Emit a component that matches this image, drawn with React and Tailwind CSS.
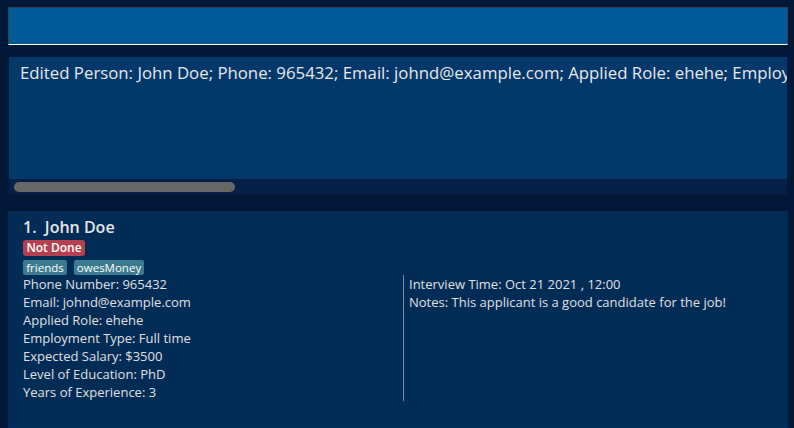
import React from 'react';

const details = [
    'Phone Number: 965432',
    'Email: johnd@example.com',
    'Applied Role: ehehe',
    'Employment Type: Full time',
    'Expected Salary: $3500',
    'Level of Education: PhD',
    'Years of Experience: 3',
];

const notes = [
    'Interview Time: Oct 21 2021 , 12:00',
    'Notes: This applicant is a good candidate for the job!',
];

const App = () => {
    return (
        <div
            className="w-[794px] h-[428px] overflow-hidden bg-[#011936] pt-[7px] pl-[8px]"
            style={{ fontFamily: '"Open Sans", "Noto Sans", sans-serif' }}
        >
            {/* command box */}
            <div className="w-[780px] h-[38px] bg-[#015a96] border border-[#3b3f46] border-b-white" />

            {/* result display */}
            <div className="mt-[12px] ml-[1px] w-[778px]">
                <div className="h-[122px] bg-[#03386b] overflow-hidden pl-[11px] pt-[4px]">
                    <p className="text-[16.8px] leading-[24px] text-[#e8e8e8] whitespace-nowrap">
                        Edited Person: John Doe; Phone: 965432; Email: johnd@example.com; Applied Role: ehehe; Employment Type: Full time
                    </p>
                </div>
                <div className="h-[15px] bg-[#061f47] pt-[3px] pl-[5px]">
                    <div className="w-[221px] h-[10px] rounded-full bg-[#676767]" />
                </div>
            </div>

            {/* person card */}
            <div className="mt-[17px] w-[780px] h-[215px] bg-[#012c56] pt-[6px] pl-[15px]">
                <h2 className="text-[16px] leading-[20px] font-semibold text-[#e6e6e6] whitespace-pre">
                    {'1.  John Doe'}
                </h2>
                <div className="mt-[3px] flex">
                    <span className="h-[16px] w-[62px] text-center rounded-[3px] bg-[#b5404f] text-white text-[12px] leading-[16px] font-semibold">
                        Not Done
                    </span>
                </div>
                <div className="mt-[4px] flex gap-[7px]">
                    <span className="h-[15px] w-[44px] text-center rounded-[2px] bg-[#3b7a8f] text-white text-[11.5px] leading-[15px]">
                        friends
                    </span>
                    <span className="h-[15px] w-[70px] text-center rounded-[2px] bg-[#3b7a8f] text-white text-[11.5px] leading-[15px]">
                        owesMoney
                    </span>
                </div>
                <div className="flex text-[13px] leading-[18px] text-[#e0e0e0]">
                    <div className="w-[380px]">
                        {details.map((line) => (
                            <div key={line}>{line}</div>
                        ))}
                    </div>
                    <div className="border-l border-[#7f8ea3] pl-[5px] h-[126px]">
                        {notes.map((line) => (
                            <div key={line}>{line}</div>
                        ))}
                    </div>
                </div>
            </div>
            <div className="w-[780px] h-[4px] bg-[#00305f]" />
        </div>
    );
};

export default App;
